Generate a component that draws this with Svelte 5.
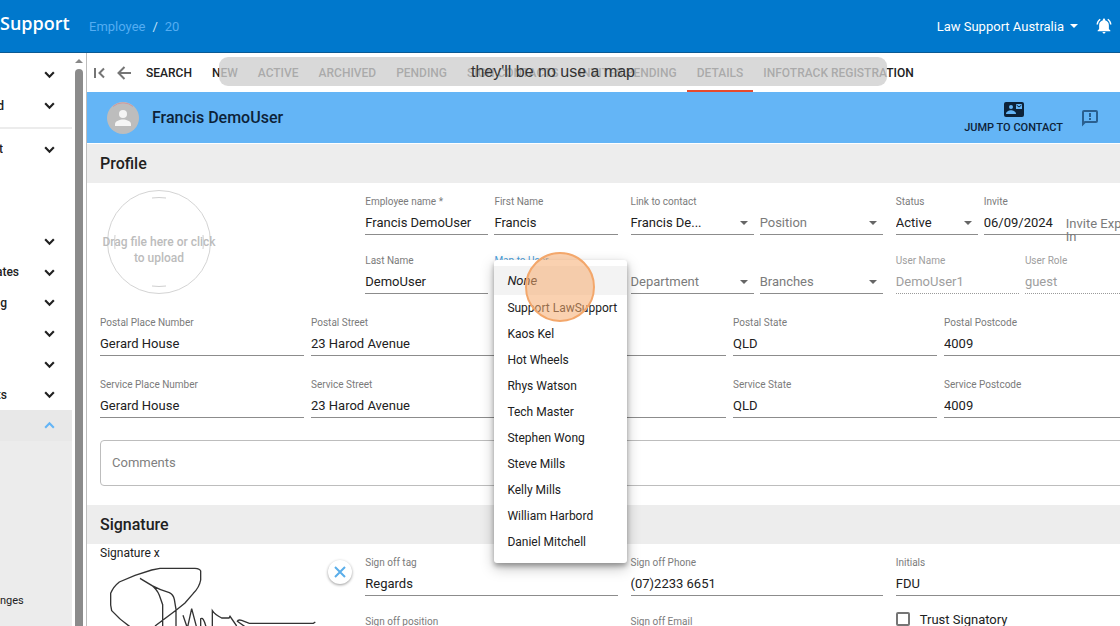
<script>
  const topLinks = [
    { text: "", width: 0 },
    { text: "d", width: 4 },
  ];
  const sideLinks = [
    { text: "", width: 0 },
    { text: "ates", width: 19 },
    { text: "g", width: 7 },
    { text: "", width: 0 },
    { text: "", width: 0 },
    { text: "ts", width: 7 },
    { text: "", width: 0, open: true },
  ];
  const tabs = [
    "SEARCH",
    "NEW",
    "ACTIVE",
    "ARCHIVED",
    "PENDING",
    "SIGN CONTACTS",
    "INVITES PENDING",
    "DETAILS",
    "INFOTRACK REGISTRATION",
  ];
  const users = [
    "Support LawSupport",
    "Kaos Kel",
    "Hot Wheels",
    "Rhys Watson",
    "Tech Master",
    "Stephen Wong",
    "Steve Mills",
    "Kelly Mills",
    "William Harbord",
    "Daniel Mitchell",
  ];
  const address = {
    "Place Number": "Gerard House",
    Street: "23 Harod Avenue",
    Suburb: "",
    State: "QLD",
    Postcode: "4009",
  };

  let activeTab = $state("DETAILS");
  let mappedUser = $state("");
  let menuOpen = $state(true);

  function pick(name) {
    mappedUser = name;
    menuOpen = false;
  }
</script>

{#snippet chevron(open)}
  <svg class="chevron" class:open viewBox="0 0 12 12" aria-hidden="true">
    <path d="M2 4l4 4 4-4" fill="none" stroke="currentColor" stroke-width="2" />
  </svg>
{/snippet}

{#snippet field(label, value, disabled = false)}
  <label class="field" class:disabled>
    <span>{label}</span>
    <input type="text" {value} {disabled} />
  </label>
{/snippet}

{#snippet dropdown(label, value)}
  <label class="field dropdown" class:empty={!value}>
    <span>{value ? label : ""}</span>
    <select aria-label={label}>
      <option>{value || label}</option>
    </select>
  </label>
{/snippet}

{#snippet sideLink(link)}
  <button class="side-link" class:open={link.open} aria-label={link.text || "Section"}>
    <span style="width: {link.width}px">{link.text}</span>
    {@render chevron(link.open)}
  </button>
{/snippet}

<div class="app">
  <header class="topbar">
    <strong class="brand">Support</strong>
    <nav class="crumbs">
      <a href="#employee">Employee</a>
      <i>/</i>
      <a href="#20">20</a>
    </nav>
    <button class="company">Law Support Australia <b class="caret"></b></button>
    <button class="bell" aria-label="Notifications">
      <svg viewBox="0 0 24 24" fill="currentColor">
        <path
          d="M12 22c1.1 0 2-.9 2-2h-4c0 1.1.9 2 2 2zm6.5-6v-5.5c0-3.1-2.100-5.600-5-6.300V3.500c0-.8-.7-1.500-1.500-1.500s-1.500.7-1.500 1.500v.7c-2.900.7-5 3.200-5 6.300V16l-2 2v1h17v-1zM7.600 3.600L6.200 2.200C3.800 4 2.200 6.800 2 10h2c.2-2.600 1.500-4.900 3.600-6.400zM20 10h2c-.2-3.200-1.800-6-4.200-7.800l-1.400 1.400C18.500 5.100 19.800 7.400 20 10z"
        />
      </svg>
    </button>
  </header>

  <div class="shell">
    <aside>
      <nav>
        <div class="group top">
          {#each topLinks as link}
            {@render sideLink(link)}
          {/each}
        </div>
        <hr />
        <div class="group single">
          {@render sideLink({ text: "t", width: 3 })}
        </div>
        <div class="group rest">
          {#each sideLinks as link}
            {@render sideLink(link)}
          {/each}
        </div>
        <div class="submenu">
          <a href="#changes">nges</a>
        </div>
      </nav>
      <div class="scrollbar">
        <b></b>
        <i></i>
      </div>
    </aside>

    <main>
      <nav class="tabs">
        <button class="nav-icon" aria-label="First">
          <svg viewBox="0 0 14 14" fill="none" stroke="currentColor" stroke-width="2">
            <path d="M2 2v10M11 2.500L6.500 7l4.500 4.500" />
          </svg>
        </button>
        <button class="nav-icon" aria-label="Back">
          <svg viewBox="0 0 14 14" fill="none" stroke="currentColor" stroke-width="2">
            <path d="M14 7H2M7.500 1L1.500 7l6 6" />
          </svg>
        </button>
        {#each tabs as tab}
          <button class="tab" class:active={tab === activeTab} onclick={() => (activeTab = tab)}>
            {tab}
          </button>
        {/each}
      </nav>

      <div class="titlebar">
        <svg class="avatar" viewBox="0 0 32 32">
          <circle cx="16" cy="16" r="16" fill="#bdbdbd" />
          <path d="M6 4.500a15.500 15.500 0 0 1 20 0" fill="none" stroke="#cf9a9e" />
          <circle cx="16" cy="12" r="4" fill="#f5f5f5" />
          <path d="M8 24v-2c0-2.800 5-4.500 8-4.500s8 1.700 8 4.500v2z" fill="#f5f5f5" />
        </svg>
        <h1>Francis DemoUser</h1>
        <button class="jump">
          <svg viewBox="0 0 20 16">
            <rect width="20" height="15" rx="2" fill="#0d2238" />
            <circle cx="7" cy="5" r="2" fill="#64b5f6" />
            <path d="M2 12c0-2.500 3-3.700 5-3.700s5 1.200 5 3.700z" fill="#64b5f6" />
            <rect x="12" y="2" width="6" height="5" fill="#64b5f6" />
            <path d="M12.500 3L15 5l2.500-2" fill="none" stroke="#0d2238" />
          </svg>
          JUMP TO CONTACT
        </button>
        <button class="feedback" aria-label="Feedback">
          <svg viewBox="0 0 18 18" fill="none" stroke="currentColor" stroke-width="2">
            <path d="M2 15V3q0-1 1-1h12q1 0 1 1v9q0 1-1 1H4z" />
            <path d="M9 4v4M9 9v2" />
          </svg>
        </button>
      </div>

      <h2>Profile</h2>
      <section>
        <div class="quads">
          <button class="upload">
            <svg viewBox="0 0 104 104" fill="none" stroke="#cfcfcf" aria-hidden="true">
              <path d="M45 8q7-1 14 0M45 96q7 1 14 0M8 45q-1 7 0 14M96 45q1 7 0 14" />
            </svg>
            <span>Drag file here or click to upload</span>
          </button>

          <div class="pair">
            {@render field("Employee name *", "Francis DemoUser")}
            {@render field("First Name", "Francis")}
            {@render field("Last Name", "DemoUser")}
            <div class="field mapped">
              <span>Map to User</span>
              <button class="mapped-value" aria-label="Map to User" onclick={() => (menuOpen = !menuOpen)}>
                {mappedUser}
              </button>
              {#if menuOpen}
                <div class="menu" role="listbox">
                  <button class="none" role="option" aria-selected="true" onclick={() => pick("")}>
                    None
                  </button>
                  {#each users as user}
                    <button role="option" aria-selected="false" onclick={() => pick(user)}>{user}</button>
                  {/each}
                </div>
              {/if}
            </div>
          </div>

          <div class="pair">
            {@render dropdown("Link to contact", "Francis De...")}
            {@render dropdown("Position", "")}
            {@render dropdown("Department", "")}
            {@render dropdown("Branches", "")}
          </div>

          <div class="access">
            <div class="invite-row">
              {@render dropdown("Status", "Active")}
              <div class="invite">
                {@render field("Invite", "06/09/2024")}
                <span class="expires">Invite Expires In</span>
              </div>
            </div>
            <div class="pair">
              {@render field("User Name", "DemoUser1", true)}
              {@render field("User Role", "guest", true)}
            </div>
          </div>
        </div>

        {#each ["Postal", "Service"] as kind}
          <div class="address">
            {#each Object.entries(address) as [part, value]}
              {@render field(kind + " " + part, value)}
            {/each}
          </div>
        {/each}

        <textarea rows="1" placeholder="Comments" aria-label="Comments"></textarea>
      </section>

      <h2>Signature</h2>
      <section>
        <div class="quads">
          <div class="signature">
            <div>
              <p>Signature x</p>
              <svg viewBox="60 180 660 210" fill="none" stroke="#333" stroke-width="4">
                <path
                  d="M180 235L215 256Q232 270 238 286L248 314V380M180 235L216 257Q240 270 268 278Q280 284 283 298L288 328V385M150 380Q120 360 95 332L92 315V280Q100 260 118 246L165 226L215 210L240 205H345Q360 206 362 213V240Q358 262 340 280L315 309L290 329L225 378"
                />
                <path
                  d="M309 346L320 378M322 385L335 326L352 390M362 385V356Q370 350 378 380M397 390V332Q405 344 425 354H447L450 349L470 378M495 380L472 364Q474 358 485 361L508 370H700L706 366"
                />
              </svg>
            </div>
            <button class="clear" aria-label="Clear signature">
              <svg viewBox="0 0 12 12" stroke="currentColor" stroke-width="2">
                <path d="M1 1l10 10M11 1L1 11" />
              </svg>
            </button>
          </div>
          <div class="stack">
            {@render field("Sign off tag", "Regards")}
            {@render field("Sign off position", "")}
          </div>
          <div class="stack">
            {@render field("Sign off Phone", "(07)2233 6651")}
            {@render field("Sign off Email", "")}
          </div>
          <div class="stack">
            {@render field("Initials", "FDU")}
            <label class="check"><input type="checkbox" />Trust Signatory</label>
          </div>
        </div>
      </section>
    </main>
  </div>

  <div class="caption">they'll be no use a map</div>
  <div class="click-spot"></div>
</div>

<style>
  :global(body) {
    margin: 0;
  }
  .app {
    position: relative;
    display: flex;
    flex-direction: column;
    height: 100vh;
    overflow: hidden;
    background: #fff;
    color: #212121;
    font-family: Roboto, sans-serif;
    font-size: 13px;
  }
  .app * {
    box-sizing: border-box;
  }
  button,
  input,
  select,
  textarea {
    margin: 0;
    padding: 0;
    border: 0;
    background: none;
    color: inherit;
    font: inherit;
    outline: none;
  }
  button {
    cursor: pointer;
  }
  svg {
    display: block;
  }

  .topbar {
    display: flex;
    flex: none;
    align-items: center;
    height: 53px;
    padding-right: 7px;
    border-bottom: 1px solid #0a5a94;
    background: #0078cc;
    color: #fff;
  }
  .brand {
    width: 89px;
    padding-bottom: 6px;
    font: 600 18px "Open Sans", sans-serif;
  }
  .crumbs {
    display: flex;
    flex: 1;
    gap: 7px;
  }
  .crumbs a {
    color: #54adf2;
    text-decoration: none;
  }
  .crumbs i {
    color: #c5e2f7;
    font-style: normal;
  }
  .company {
    display: flex;
    align-items: center;
    gap: 6px;
    margin-right: 17px;
  }
  .caret {
    border: 4px solid transparent;
    border-top-color: currentColor;
    border-bottom: 0;
  }
  .bell svg {
    width: 18px;
    height: 18px;
  }

  .shell {
    display: flex;
    flex: 1;
    min-height: 0;
  }
  aside {
    display: flex;
    flex: none;
    width: 87px;
    border-right: 1px solid #bdbdbd;
  }
  aside nav {
    display: flex;
    flex-direction: column;
    width: 72px;
    margin-right: 3px;
    padding-top: 6px;
  }
  .group {
    display: flex;
    flex-direction: column;
  }
  .top {
    height: 62px;
  }
  .single {
    height: 30px;
  }
  .rest {
    height: 215px;
    margin-top: 62px;
  }
  hr {
    width: 100%;
    height: 2px;
    margin: 6px 0 5px;
    border: 0;
    background: #ececec;
  }
  .side-link {
    display: flex;
    flex: 1;
    align-items: center;
    justify-content: space-between;
    padding-right: 16px;
    font-size: 12px;
    font-weight: 500;
  }
  .side-link span {
    display: flex;
    justify-content: flex-end;
    overflow: hidden;
  }
  .side-link.open {
    background: #e8e8e8;
    color: #64b5f6;
  }
  .chevron {
    width: 13px;
    height: 13px;
  }
  .chevron.open {
    transform: rotate(180deg);
  }
  .submenu {
    flex: 1;
    padding-top: 153px;
    background: #ececec;
  }
  .submenu a {
    display: block;
    color: #212121;
    font-size: 11px;
    text-decoration: none;
  }
  .scrollbar {
    display: flex;
    flex-direction: column;
    align-items: center;
    width: 8px;
    gap: 6px;
    padding-top: 6px;
  }
  .scrollbar b {
    border: 4px solid transparent;
    border-top: 0;
    border-bottom-color: #888;
  }
  .scrollbar i {
    flex: 1;
    width: 8px;
    border-radius: 4px 4px 0 0;
    background: #8b8b8b;
  }

  main {
    flex: 1;
    min-width: 0;
    overflow: hidden;
  }
  .tabs {
    display: flex;
    align-items: center;
    height: 39px;
    padding-left: 6px;
  }
  .nav-icon {
    width: 14px;
    margin-right: 10px;
    color: #757575;
  }
  .nav-icon svg {
    width: 14px;
    height: 14px;
  }
  .nav-icon + .tab {
    margin-left: -5px;
  }
  .tab {
    height: 39px;
    padding: 2px 10px 0;
    border-bottom: 2px solid transparent;
    font-size: 12px;
    font-weight: 500;
    white-space: nowrap;
  }
  .tab.active {
    border-color: #e64a2e;
  }
  .titlebar {
    display: flex;
    align-items: center;
    height: 51px;
    margin-bottom: 1px;
    padding: 0 21px 0 20px;
    background: #64b5f6;
    color: #0d2238;
  }
  .avatar {
    width: 32px;
    height: 32px;
  }
  h1 {
    flex: 1;
    margin: 0 0 0 13px;
    font-size: 16px;
    font-weight: 500;
  }
  .jump {
    display: flex;
    flex-direction: column;
    align-items: center;
    gap: 3px;
    margin-right: 18px;
    font-size: 11px;
    font-weight: 500;
  }
  .jump svg {
    width: 20px;
    height: 16px;
  }
  .feedback {
    color: #2a5f8f;
  }
  .feedback svg {
    width: 18px;
    height: 18px;
  }
  h2 {
    height: 39px;
    margin: 0;
    padding-left: 13px;
    background: #ededed;
    font-size: 16px;
    font-weight: 500;
    line-height: 39px;
  }
  /* the form runs a little past the right edge of the window */
  section {
    margin-right: -28px;
    padding: 12px 0 19px 13px;
  }
  .quads {
    display: grid;
    grid-template-columns: repeat(4, minmax(0, 1fr));
    gap: 13px;
  }
  .pair {
    display: grid;
    grid-template-columns: repeat(2, minmax(0, 1fr));
    gap: 19px 6px;
  }
  .access,
  .stack {
    display: flex;
    flex-direction: column;
    gap: 19px;
  }
  .address {
    display: grid;
    grid-template-columns: repeat(5, minmax(0, 1fr));
    gap: 7px;
    margin-top: 22px;
  }
  .field {
    position: relative;
    display: flex;
    flex-direction: column;
    justify-content: space-between;
    height: 40px;
    min-width: 0;
    border-bottom: 1px solid #8c8c8c;
  }
  .field > span {
    height: 14px;
    color: #7b7b7b;
    font-size: 10px;
    line-height: 14px;
  }
  .field input,
  .field select {
    width: 100%;
    height: 24px;
  }
  .field select {
    appearance: none;
  }
  .dropdown::after {
    position: absolute;
    right: 6px;
    bottom: 9px;
    border: 4px solid transparent;
    border-top-color: #666;
    border-bottom: 0;
    content: "";
  }
  .empty {
    color: #7b7b7b;
  }
  .disabled {
    border-bottom: 1px dotted #9a9a9a;
    color: #9e9e9e;
  }
  .disabled > span {
    color: #9e9e9e;
  }
  .invite-row {
    display: grid;
    grid-template-columns: 82px 1fr;
    gap: 6px;
  }
  .invite {
    position: relative;
  }
  .expires {
    position: absolute;
    top: 22px;
    left: 82px;
    width: 86px;
    color: #7b7b7b;
    line-height: 13px;
  }
  .mapped > span {
    color: #4a9edb;
  }
  .mapped-value {
    height: 24px;
    text-align: left;
  }
  .menu {
    position: absolute;
    z-index: 2;
    top: 6px;
    left: 0;
    display: flex;
    flex-direction: column;
    width: 133px;
    padding: 6px 0 8px;
    border-radius: 3px;
    background: #fff;
    box-shadow:
      0 3px 5px rgba(0, 0, 0, 0.3),
      0 5px 14px rgba(0, 0, 0, 0.25);
  }
  .menu button {
    height: 26px;
    padding-left: 13px;
    font-size: 12px;
    text-align: left;
    white-space: nowrap;
  }
  .menu .none {
    height: 29px;
    background: #f3f3f3;
    font-size: 13px;
    font-style: italic;
  }
  textarea {
    display: block;
    width: 100%;
    height: 46px;
    margin-top: 22px;
    padding: 12px 11px;
    border: 1px solid #bdbdbd;
    border-radius: 4px;
    line-height: 20px;
    resize: none;
  }
  textarea::placeholder {
    color: #808080;
  }

  .upload {
    position: relative;
    display: flex;
    align-items: center;
    justify-content: center;
    width: 104px;
    height: 104px;
    margin: -5px 7px 0;
    padding-top: 16px;
    border: 1px solid #d4d4d4;
    border-radius: 50%;
    color: #bcbcbc;
    font-size: 12px;
    font-weight: 500;
    line-height: 16px;
  }
  .upload svg {
    position: absolute;
    inset: -1px;
  }
  .upload span {
    flex: none;
    width: 116px;
  }

  .signature {
    display: flex;
    justify-content: space-between;
    margin-top: -10px;
  }
  .signature p {
    margin: 0;
    font-size: 12px;
    line-height: 14px;
  }
  .signature svg {
    width: 220px;
    height: 70px;
  }
  .clear {
    display: grid;
    place-items: center;
    width: 24px;
    height: 24px;
    margin-top: 14px;
    border-radius: 50%;
    box-shadow: 0 1px 3px rgba(0, 0, 0, 0.4);
    color: #5aaeea;
  }
  .signature .clear svg {
    width: 12px;
    height: 12px;
  }
  .check {
    display: flex;
    align-items: center;
    gap: 10px;
    height: 14px;
    margin-top: -3px;
  }
  .check input {
    width: 14px;
    height: 14px;
    border: 2px solid #757575;
    border-radius: 2px;
    appearance: none;
  }

  .caption {
    position: absolute;
    top: 57px;
    left: 219px;
    z-index: 3;
    width: 668px;
    border-radius: 9px;
    background: rgba(207, 207, 207, 0.79);
    color: #333;
    font: 16px/29px "Liberation Sans", sans-serif;
    text-align: center;
  }
  .click-spot {
    position: absolute;
    top: 252px;
    left: 525px;
    z-index: 4;
    width: 70px;
    height: 70px;
    border: 2px solid #f3a76b;
    border-radius: 50%;
    background: rgba(245, 172, 112, 0.55);
    pointer-events: none;
  }
</style>
